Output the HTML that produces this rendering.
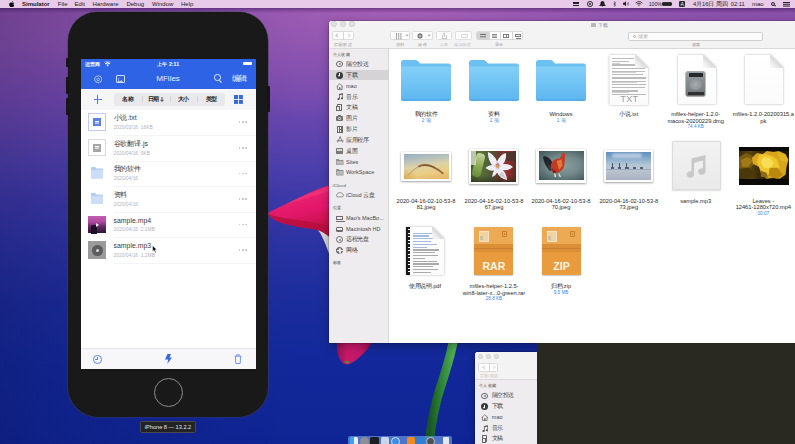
<!DOCTYPE html>
<html>
<head>
<meta charset="utf-8">
<title>Simulator</title>
<style>
*{box-sizing:border-box;margin:0;padding:0}
html,body{width:795px;height:444px;overflow:hidden;background:#10269a}
body{font-family:"Liberation Sans",sans-serif;position:relative;color:#222}
.abs{position:absolute}
.c{display:inline-block;width:1em;text-align:center;font-style:normal;font-weight:inherit}
#desk{left:0;top:0;width:795px;height:444px;
 background:
 linear-gradient(90deg,rgba(10,5,40,.2) 0,rgba(10,5,40,.12) 70px,rgba(10,5,40,0) 300px),
 radial-gradient(ellipse 430px 120px at 400px 0px, rgba(172,100,186,.85) 0%, rgba(152,90,180,.45) 50%, rgba(120,70,170,0) 100%),
 linear-gradient(180deg,#8a4ea8 0%,#8450ac 10%,#7249ae 22%,#5040ac 36%,#3c38a8 45%,#2a32a2 56%,#1b2c9c 68%,#12289a 82%,#0f2595 100%);}
#menubar{left:0;top:0;width:795px;height:7.6px;background:#e7cbe9;font-size:6px;line-height:8px;color:#1a1a1a;white-space:nowrap}
#menubar span{position:absolute;top:0}
/* phone */
#phone{left:68.3px;top:12.4px;width:199.7px;height:404.8px;background:#19191a;border-radius:29px 29px 30px 30px;box-shadow:0 0 0 .6px rgba(70,60,90,.8)}
.pbtn{background:#161617;width:3px;border-radius:1px}
#screen{left:80.6px;top:58.7px;width:175.4px;height:310.3px;background:#fff;overflow:hidden}
#hdr{left:0;top:0;width:175px;height:30px;background:#2f63e6}
#tb{left:0;top:30px;width:175px;height:21px;background:#f6f6f8}
#seg{left:33.600px;top:34.300px;width:110.800px;height:12.700px;background:#e9e9ec;border-radius:3px}
.segt{top:3px;font-size:5.6px;line-height:7px;color:#222;font-weight:bold;width:27.700px;text-align:center}
.row{left:0;width:175px;height:25.6px}
.rt{left:33px;top:4.5px;font-size:6.9px;line-height:8px;color:#3a3a3c;white-space:nowrap}
.rs{left:33px;top:15.3px;font-size:4.9px;line-height:5.4px;color:#b2b2b8;white-space:nowrap}
.dots{left:158px;top:11.700px;width:9px;height:2px}
.dots i{position:absolute;top:0;width:1.7px;height:1.7px;border-radius:50%;background:#c2c2c9}
.sep{left:33px;width:142px;height:.5px;background:#f4f4f6}
#tab{left:0;top:289.3px;width:175px;height:21px;background:#f7f7fa;border-top:.5px solid #e6e6ea}
#home{left:153.5px;top:377.5px;width:29px;height:29px;border-radius:50%;border:1px solid #8b8b8b;background:#19191a}
#plabel{left:140px;top:421px;width:56px;height:12px;background:#232325;border:.5px solid #4a4a4e;border-radius:1.5px;color:#e8e8e8;font-size:5.6px;line-height:11px;text-align:center;white-space:nowrap}
/* finder */
#finder{left:328.5px;top:20.5px;width:470px;height:322px;background:#fff;border-radius:3px 0 0 0;overflow:hidden;box-shadow:0 0 0 .5px rgba(0,0,0,.25),0 3px 10px rgba(0,0,0,.3)}
#ftool{left:0;top:0;width:470px;height:28px;background:#f3f3f3;border-bottom:.6px solid #d9d9d9}
#fside{left:0;top:28px;width:60px;height:294px;background:#eeecee;border-right:.5px solid #d8d8d8}
.sl{left:4px;font-size:4.4px;line-height:6px;color:#8a8a8a;font-weight:bold;white-space:nowrap}
.si{left:17.5px;font-size:5.5px;line-height:7px;color:#464646;white-space:nowrap}
.sic{left:8px;width:7px;height:7px}
.tbtn{background:#fbfbfb;border:.5px solid #cfcfcf;border-radius:1.5px;height:9px;top:11px}
.tl{top:21.5px;font-size:4.2px;line-height:5px;color:#9a9a9a;white-space:nowrap;text-align:center}
.lab{font-size:5.7px;line-height:6.5px;color:#2a2a2a;text-align:center;width:74px;white-space:nowrap}
.lab b{display:block;font-weight:normal;color:#3b83e8;font-size:4.6px;line-height:5.6px}
#dark{left:536.5px;top:343px;width:260px;height:102px;background:#292821}
#f2{left:474.8px;top:352.3px;width:70px;height:95px;background:#eeecee;border-radius:3px 3px 0 0;overflow:hidden;box-shadow:0 0 0 .5px rgba(0,0,0,.3),0 2px 8px rgba(0,0,0,.35)}
#dock{left:347.5px;top:436px;width:104.5px;height:10px;background:rgba(120,170,235,.6);border-radius:2px 2px 0 0}
</style>
</head>
<body>
<div id="desk" class="abs"></div>
<svg class="abs" style="left:0;top:0" width="795" height="444" viewBox="0 0 795 444">
<defs>
<linearGradient id="p1" x1=".3" y1="0" x2=".6" y2="1"><stop offset="0" stop-color="#f02a72"/><stop offset=".55" stop-color="#e2166a"/><stop offset=".8" stop-color="#cc1250"/><stop offset="1" stop-color="#b01040"/></linearGradient>
<linearGradient id="p2" x1="0" y1="0" x2="1" y2="0"><stop offset="0" stop-color="#98124f"/><stop offset=".3" stop-color="#c81a6c"/><stop offset=".7" stop-color="#bd1664"/><stop offset="1" stop-color="#8a104a"/></linearGradient>
<linearGradient id="st" x1="0" y1="0" x2="1" y2="0"><stop offset="0" stop-color="#185522"/><stop offset=".5" stop-color="#2c8436"/><stop offset="1" stop-color="#50aa55"/></linearGradient>
</defs>
<path fill="#d5d9d6" d="M315 227.500c5 3 9 12 14 26v-30z"/>
<path fill="url(#p1)" d="M267.500 213.500c8-5 22-11 34-17 10-5 20-9 28-11.500v52c-4-3.500-9-6.500-14-7.500-10-2-22-3-32-6-7-2-13-5.500-16-10z"/>
<path fill="#b50f3c" opacity=".8" d="M267.500 213.500c6 2.500 13 4 20 5 12 1.800 26 3 42 8v10.500c-4-3.500-9-6.500-14-7.500-10-2-22-3-32-6-7-2-13-5.500-16-10z"/>
<path fill="#f4407e" opacity=".5" d="M285 204.500c10-5 28-13 44-18v5c-14 4-30 9-44 13z"/>
<path fill="url(#p2)" d="M337 340c-.8 8 .5 16 4 21 2.500 3.500 6 4.200 9.500 2.500 8.500-4.500 17.500-13 23-24z"/>
<path fill="#5a8a30" d="M344 361.500c1.500 2 4 2.500 6 1.500l-2.500-2.500z"/>
<path fill="none" stroke="url(#st)" stroke-width="9" d="M453.500 340c-3 17-8 32-13 47-4.500 14-8.500 32-11 52"/>
</svg>
<div class="abs" style="left:0;top:7.500px;width:795px;height:5px;background:linear-gradient(180deg,rgba(40,10,70,.42),rgba(40,10,70,0))"></div>
<div id="menubar" class="abs">
<svg class="abs" style="left:9px;top:.8px" width="5.5" height="6.2" viewBox="0 0 17 20"><path fill="#111" d="M12.2 0c.1 1.2-.4 2.3-1 3.100-.7.800-1.800 1.500-2.900 1.400-.1-1.100.4-2.300 1-3 .700-.800 1.900-1.400 2.900-1.500zM16 14.600c-.4 1-.7 1.500-1.200 2.400-.8 1.200-1.900 2.800-3.300 2.800-1.200 0-1.500-.8-3.200-.8-1.600 0-2 .8-3.200.8-1.400 0-2.400-1.400-3.200-2.700C-.3 13.700-.5 9.600 1 7.500c1-1.500 2.600-2.400 4.100-2.400 1.500 0 2.500.8 3.700.8 1.200 0 2-.8 3.700-.8 1.300 0 2.700.7 3.700 2-3.300 1.800-2.700 6.400.8 7.500z"/></svg>
<span style="left:22px;font-weight:bold">Simulator</span>
<span style="left:57.8px">File</span>
<span style="left:74.6px">Edit</span>
<span style="left:92.5px">Hardware</span>
<span style="left:126.4px">Debug</span>
<span style="left:152px">Window</span>
<span style="left:181px">Help</span>
<div class="abs" style="left:573px;top:2.2px;width:6px;height:1.4px;background:#222"></div>
<div class="abs" style="left:573px;top:4.6px;width:6px;height:1.4px;background:#222"></div>
<div class="abs" style="left:587px;top:1.2px;width:5.6px;height:5.6px;border-radius:50%;border:.8px solid #222"></div>
<div class="abs" style="left:588.9px;top:3.1px;width:1.8px;height:1.8px;border-radius:50%;background:#222"></div>
<svg class="abs" style="left:598.5px;top:1px" width="7" height="6.2" viewBox="0 0 14 12"><path fill="#222" d="M7 0c2.600 0 4 2 4 4.500 0 2.500 1 3.500 2.500 4.500v1h-13V9C2 8 3 7 3 4.500 3 2 4.400 0 7 0zM5.500 10.800h3c0 .8-.7 1.200-1.500 1.200s-1.500-.4-1.500-1.200z"/></svg>
<svg class="abs" style="left:612.5px;top:1px" width="3.4" height="6" viewBox="0 0 7 12"><path fill="none" stroke="#333" stroke-width="1.100" d="M.8 3.300l5 5L3.300 11V1l2.500 2.600-5 5"/></svg>
<svg class="abs" style="left:622.5px;top:1.2px" width="6.500" height="5.600" viewBox="0 0 13 11"><path fill="#222" d="M0 3.500h2.500L6 .5v10l-3.500-3H0z"/><path fill="none" stroke="#222" stroke-width="1" d="M8 3.500c1 .8 1 3.200 0 4M9.800 2c2 1.800 2 5.200 0 7"/></svg>
<svg class="abs" style="left:635px;top:1.200px" width="8" height="5.800" viewBox="0 0 16 12"><path fill="none" stroke="#222" stroke-width="1.700" d="M1 4.200c4-4 10-4 14 0M3.500 6.800c2.700-2.600 6.300-2.600 9 0M6 9.300c1.300-1.200 2.700-1.200 4 0"/></svg>
<span style="left:648.7px;font-size:5.200px">100%</span>
<div class="abs" style="left:662px;top:1.900px;width:9.500px;height:4.400px;border:.6px solid #333;border-radius:1px"></div>
<div class="abs" style="left:663px;top:2.900px;width:7.500px;height:2.400px;background:#222"></div>
<div class="abs" style="left:679px;top:.8px;width:6.400px;height:6.400px;background:#2c2c2e;border-radius:1px;color:#eee;font-size:5px;line-height:6.400px;text-align:center">A</div>
<span style="left:693px;font-size:5.800px">4<em class="c">月</em>16<em class="c">日</em> <em class="c">周</em><em class="c">四</em>&nbsp; 02:11</span>
<span style="left:752px">mao</span>
<div class="abs" style="left:770.5px;top:1.500px;width:4px;height:4px;border-radius:50%;border:.8px solid #222"></div>
<div class="abs" style="left:774px;top:5px;width:2px;height:.8px;background:#222;transform:rotate(45deg)"></div>
<div class="abs" style="left:783px;top:2px;width:6.500px;height:.9px;background:#222;box-shadow:0 1.800px 0 #222,0 3.600px 0 #222"></div>
</div>
<div id="phone" class="abs"></div>
<div class="abs pbtn" style="left:66.300px;top:58px;height:9px"></div>
<div class="abs pbtn" style="left:66.300px;top:77px;height:17px"></div>
<div class="abs pbtn" style="left:66.300px;top:98px;height:17px"></div>
<div class="abs pbtn" style="left:267px;top:86px;height:26px"></div>
<div id="screen" class="abs">
<div id="hdr" class="abs">
 <div class="abs" style="left:4.300px;top:2px;font-size:5.200px;line-height:6.400px;color:#fff;font-weight:bold;white-space:nowrap"><em class="c">运</em><em class="c">营</em><em class="c">商</em></div>
 <svg class="abs" style="left:23px;top:2.500px" width="7.200" height="5.400" viewBox="0 0 16 12"><path fill="#fff" d="M8 12l-2.600-3c1.500-1.300 3.700-1.300 5.200 0zM3.800 7.200 2 5.200c3.400-3 8.600-3 12 0l-1.800 2c-2.400-2.100-6-2.100-8.400 0zM.6 3.600C4.800-.2 11.200-.2 15.400 3.600L16 3C11.500-1 4.500-1 0 3z"/></svg>
 <div class="abs" style="left:0;top:2px;width:175px;text-align:center;font-size:5.200px;line-height:6.400px;color:#fff;font-weight:bold"><em class="c">上</em><em class="c">午</em> 2:11</div>
 <div class="abs" style="left:162.500px;top:3.200px;width:8.500px;height:3.600px;background:#fff;border-radius:1px"></div>
 <svg class="abs" style="left:13.200px;top:16.400px" width="8.400" height="8.800" viewBox="0 0 20 21"><path fill="none" stroke="#cfdcff" stroke-width="1.800" stroke-linejoin="round" d="M10 1.200l2.300 1.900 3-.4.900 2.900 2.600 1.500-1 2.900 1 2.900-2.600 1.500-.9 2.900-3-.4-2.300 1.900-2.300-1.900-3 .4-.9-2.900L1.200 13l1-2.900-1-2.900 2.600-1.500.9-2.900 3 .4z"/><circle cx="10" cy="10.500" r="3" fill="none" stroke="#cfdcff" stroke-width="1.700"/></svg>
 <div class="abs" style="left:35.800px;top:16.400px;width:8.400px;height:8.200px;border:.9px solid #cfdcff;border-radius:1px"></div>
 <svg class="abs" style="left:36.800px;top:19.200px" width="6.400" height="4.400" viewBox="0 0 13 9"><path fill="#cfdcff" d="M0 9l3.500-4.500L6 7.500 8.500 4 13 9z"/><circle cx="3" cy="1.800" r="1.300" fill="#cfdcff"/></svg>
 <div class="abs" style="left:0;top:15px;width:175px;text-align:center;font-size:8px;line-height:10px;color:#e9efff">MFiles</div>
 <div class="abs" style="left:133.500px;top:15.800px;width:6.600px;height:6.600px;border-radius:50%;border:.9px solid #e4ebff"></div>
 <div class="abs" style="left:138.800px;top:22px;width:3px;height:.9px;background:#e4ebff;transform:rotate(45deg)"></div>
 <div class="abs" style="left:151px;top:15px;font-size:7.600px;line-height:10px;color:#f2f5ff;white-space:nowrap"><em class="c">编</em><em class="c">辑</em></div>
</div>
<div id="tb" class="abs"></div>
<div class="abs" style="left:13px;top:40.100px;width:8.800px;height:1px;background:#4d79e8"></div>
<div class="abs" style="left:16.900px;top:36.200px;width:1px;height:8.800px;background:#4d79e8"></div>
<div id="seg" class="abs">
 <div class="abs segt" style="left:0"><em class="c">名</em><em class="c">称</em></div>
 <div class="abs segt" style="left:27.700px"><em class="c">日</em><em class="c">期</em><svg width="4" height="5" viewBox="0 0 8 10" style="margin-left:1.200px;vertical-align:-.6px"><path fill="none" stroke="#222" stroke-width="1.600" d="M4 0v8.500M.8 5.500L4 8.800l3.200-3.300"/></svg></div>
 <div class="abs segt" style="left:55.400px"><em class="c">大</em><em class="c">小</em></div>
 <div class="abs segt" style="left:83.100px"><em class="c">类</em><em class="c">型</em></div>
 <div class="abs" style="left:27.700px;top:3px;width:.5px;height:6.500px;background:#d2d2d7"></div>
 <div class="abs" style="left:55.400px;top:3px;width:.5px;height:6.500px;background:#d2d2d7"></div>
 <div class="abs" style="left:83.100px;top:3px;width:.5px;height:6.500px;background:#d2d2d7"></div>
</div>
<div class="abs" style="left:153.600px;top:36.400px;width:4px;height:4px;background:#3567e6;box-shadow:4.900px 0 0 #3567e6,0 4.900px 0 #3567e6,4.900px 4.900px 0 #3567e6"></div>
<div class="abs row" style="top:51.0px"><div class="abs" style="left:7.600px;top:3.600px;width:17.600px;height:17.600px;border:.6px solid #c0cbf3;background:#fff"></div><div class="abs" style="left:12.400px;top:8.400px;width:8.200px;height:8.200px;background:#5b7fe6"></div><div class="abs" style="left:14.700px;top:11.200px;width:3.600px;height:.8px;background:#fff;box-shadow:0 1.600px 0 #fff"></div><div class="abs rt"><em class="c">小</em><em class="c">说</em>.txt</div><div class="abs rs">2020/03/16&nbsp; 16KB</div><div class="abs dots"><i style="left:0"></i><i style="left:3.400px"></i><i style="left:6.800px"></i></div></div>
<div class="abs sep" style="top:76.3px"></div>
<div class="abs row" style="top:76.6px"><div class="abs" style="left:7.600px;top:3.600px;width:17.600px;height:17.600px;border:.6px solid #d9d9de;background:#fff"></div><div class="abs" style="left:12.400px;top:8.400px;width:8.200px;height:8.200px;background:#a6a6aa"></div><div class="abs" style="left:14.700px;top:11.200px;width:3.600px;height:.8px;background:#fff;box-shadow:0 1.600px 0 #fff"></div><div class="abs rt"><em class="c">谷</em><em class="c">歌</em><em class="c">翻</em><em class="c">译</em>.js</div><div class="abs rs">2020/04/16&nbsp; 0KB</div><div class="abs dots"><i style="left:0"></i><i style="left:3.400px"></i><i style="left:6.800px"></i></div></div>
<div class="abs sep" style="top:101.9px"></div>
<div class="abs row" style="top:102.2px"><svg class="abs" style="left:10.500px;top:6.500px" width="12" height="11.500" viewBox="0 0 24 23"><path fill="#b4cef2" d="M0 1.500C0 .7.700 0 1.500 0h7l2.500 3h11.500c.8 0 1.500.7 1.500 1.500v17c0 .8-.7 1.500-1.500 1.500h-21C.7 23 0 22.300 0 21.500z"/><path fill="#cbddf7" d="M0 6h24v15.500c0 .8-.7 1.500-1.500 1.500h-21C.7 23 0 22.300 0 21.500z"/></svg><div class="abs rt"><em class="c">我</em><em class="c">的</em><em class="c">软</em><em class="c">件</em></div><div class="abs rs">2020/04/16</div><div class="abs dots"><i style="left:0"></i><i style="left:3.400px"></i><i style="left:6.800px"></i></div></div>
<div class="abs sep" style="top:127.5px"></div>
<div class="abs row" style="top:127.8px"><svg class="abs" style="left:10.500px;top:6.500px" width="12" height="11.500" viewBox="0 0 24 23"><path fill="#b4cef2" d="M0 1.500C0 .7.700 0 1.500 0h7l2.500 3h11.500c.8 0 1.500.7 1.500 1.500v17c0 .8-.7 1.500-1.500 1.500h-21C.7 23 0 22.300 0 21.500z"/><path fill="#cbddf7" d="M0 6h24v15.500c0 .8-.7 1.500-1.500 1.500h-21C.7 23 0 22.300 0 21.500z"/></svg><div class="abs rt"><em class="c">资</em><em class="c">料</em></div><div class="abs rs">2020/04/16</div><div class="abs dots"><i style="left:0"></i><i style="left:3.400px"></i><i style="left:6.800px"></i></div></div>
<div class="abs sep" style="top:153.1px"></div>
<div class="abs row" style="top:153.4px"><div class="abs" style="left:7.600px;top:3.600px;width:17.800px;height:17.800px;background:linear-gradient(180deg,#c35fb0 0%,#b0489f 35%,#6c2a6c 60%,#2a1535 100%)"></div><div class="abs" style="left:10px;top:13px;width:6px;height:8.500px;background:#1d1026;border-radius:2px 2px 0 0"></div><div class="abs" style="left:15.200px;top:10.500px;width:0;height:0;border-left:3.500px solid #f3e6f5;border-top:2.200px solid transparent;border-bottom:2.200px solid transparent"></div><div class="abs rt">sample.mp4</div><div class="abs rs">2020/04/16&nbsp; 2.1MB</div><div class="abs dots"><i style="left:0"></i><i style="left:3.400px"></i><i style="left:6.800px"></i></div></div>
<div class="abs sep" style="top:178.7px"></div>
<div class="abs row" style="top:179.0px"><div class="abs" style="left:7.600px;top:3.600px;width:17.800px;height:17.800px;background:#9a9a9c"></div><div class="abs" style="left:11.500px;top:7.500px;width:10.500px;height:10.500px;border-radius:50%;background:#5c5c5e"></div><div class="abs" style="left:15.200px;top:11.200px;width:3.200px;height:3.200px;border-radius:50%;background:#d8d8da"></div><div class="abs rt">sample.mp3</div><div class="abs rs">2020/04/16&nbsp; 1.2MB</div><div class="abs dots"><i style="left:0"></i><i style="left:3.400px"></i><i style="left:6.800px"></i></div></div>
<div class="abs sep" style="top:204.3px"></div>

<div id="tab" class="abs">
 <div class="abs" style="left:12.700px;top:6px;width:8.600px;height:8.600px;border-radius:50%;border:.9px solid #5d86ea"></div>
 <div class="abs" style="left:16.700px;top:8px;width:.8px;height:3px;background:#5d86ea"></div>
 <div class="abs" style="left:14.600px;top:10.400px;width:2.800px;height:.8px;background:#5d86ea"></div>
 <svg class="abs" style="left:84px;top:5.500px" width="7" height="10" viewBox="0 0 14 20"><path fill="#3567e6" d="M5 0h7l-3 7h5L4.500 20 6.500 11H0z"/></svg>
 <svg class="abs" style="left:153.500px;top:5.400px" width="8" height="10" viewBox="0 0 16 20"><path fill="none" stroke="#5d86ea" stroke-width="1.700" d="M1 4.500h14M5.500 4V1.500h5V4M2.800 4.500l.8 14.500h8.800l.8-14.500"/></svg>
</div>
</div>
<div id="home" class="abs"></div>
<div id="plabel" class="abs">iPhone 8 — 13.2.2</div>
<svg class="abs" style="left:152.400px;top:244.800px" width="6" height="8.500" viewBox="0 0 12 17"><path fill="#111" stroke="#fff" stroke-width="1" d="M1 1v12l3-2.600 2.200 5 2-.9-2.200-4.800H10z"/></svg>
<div id="finder" class="abs">
<div id="ftool" class="abs"></div>
<div id="fside" class="abs"></div>
<div class="abs " style="left:2.9px;top:0.9px;width:5.2px;height:5.2px;border-radius:50%;background:#dfdfdf;border:.4px solid #d0d0d0"></div>
<div class="abs " style="left:11.9px;top:0.9px;width:5.2px;height:5.2px;border-radius:50%;background:#dfdfdf;border:.4px solid #d0d0d0"></div>
<div class="abs " style="left:20.9px;top:0.9px;width:5.2px;height:5.2px;border-radius:50%;background:#dfdfdf;border:.4px solid #d0d0d0"></div>
<div class="abs " style="left:231.5px;top:1.5px;width:80.0px;height:7.0px;font-size:5.4px;line-height:7px;color:#8a8a8a;text-align:center;white-space:nowrap"><span style="display:inline-block;width:5px;height:4px;background:#b9b9b9;border-radius:.6px;margin-right:1.500px;vertical-align:-0.300px"></span><em class="c">下</em><em class="c">载</em></div>
<div class="abs " style="left:3.1px;top:10.3px;width:22.1px;height:9.0px;background:#fdfdfd;border:.5px solid #dadada;border-radius:1.600px"><div class="abs" style="left:10.800px;top:0;width:.5px;height:8px;background:#d6d6d6"></div><div class="abs" style="left:3.800px;top:2.400px;width:3px;height:3px;border-left:.8px solid #bbb;border-bottom:.8px solid #bbb;transform:rotate(45deg)"></div><div class="abs" style="left:14px;top:2.400px;width:3px;height:3px;border-right:.8px solid #d2d2d2;border-top:.8px solid #d2d2d2;transform:rotate(45deg)"></div></div>
<div class="abs " style="left:61.5px;top:10.3px;width:20.4px;height:9.0px;background:#fdfdfd;border:.5px solid #dadada;border-radius:1.600px"><div class="abs" style="left:5px;top:1.700px;width:1.200px;height:1.200px;background:#999;box-shadow:2.200px 0 0 #999,4.400px 0 0 #999,0 2.200px 0 #999,2.200px 2.200px 0 #999,4.400px 2.200px 0 #999,0 4.400px 0 #999,2.200px 4.400px 0 #999,4.400px 4.400px 0 #999"></div><div class="abs" style="left:14.800px;top:2.400px;width:2.400px;height:2.400px;border-right:.7px solid #aaa;border-bottom:.7px solid #aaa;transform:rotate(45deg)"></div></div>
<div class="abs " style="left:83.9px;top:10.3px;width:20.4px;height:9.0px;background:#fdfdfd;border:.5px solid #dedede;border-radius:1.600px"><svg class="abs" style="left:3.600px;top:1.200px" width="6" height="6" viewBox="0 0 12 12"><g fill="#777"><circle cx="6" cy="6" r="3.900"/><rect x="5" y="0" width="2" height="12" rx=".5"/><rect x="0" y="5" width="12" height="2" rx=".5"/><rect x="5" y="0" width="2" height="12" rx=".5" transform="rotate(45 6 6)"/><rect x="5" y="0" width="2" height="12" rx=".5" transform="rotate(-45 6 6)"/></g><circle cx="6" cy="6" r="1.700" fill="#fdfdfd"/></svg><div class="abs" style="left:14.500px;top:2.400px;width:2.400px;height:2.400px;border-right:.7px solid #aaa;border-bottom:.7px solid #aaa;transform:rotate(45deg)"></div></div>
<div class="abs " style="left:107.2px;top:10.3px;width:15.9px;height:9.0px;background:#fdfdfd;border:.5px solid #dedede;border-radius:1.600px"><div class="abs" style="left:5.500px;top:3.200px;width:4.600px;height:3.800px;border:.6px solid #c8c8c8;border-top:none"></div><div class="abs" style="left:7.500px;top:1.200px;width:.6px;height:4px;background:#c8c8c8"></div><div class="abs" style="left:6.600px;top:1.300px;width:2.200px;height:2.200px;border-left:.6px solid #c8c8c8;border-top:.6px solid #c8c8c8;transform:rotate(45deg)"></div></div>
<div class="abs " style="left:126.8px;top:10.3px;width:16.9px;height:9.0px;background:#fdfdfd;border:.5px solid #dedede;border-radius:1.600px"><div class="abs" style="left:4.500px;top:2.300px;width:7.500px;height:4px;border:.6px solid #d4d4d4;border-radius:1px"></div></div>
<div class="abs " style="left:147.5px;top:10.3px;width:46.7px;height:9.0px;background:#fdfdfd;border:.5px solid #dadada;border-radius:1.600px"><div class="abs" style="left:0;top:0;width:11.600px;height:8px;background:#d4d4d4;border-radius:1.300px 0 0 1.300px"></div><div class="abs" style="left:3px;top:2.200px;width:5.500px;height:1.500px;background:#6e6e6e;box-shadow:0 2.300px 0 #6e6e6e"></div><div class="abs" style="left:11.600px;top:0;width:.5px;height:8px;background:#d6d6d6"></div><div class="abs" style="left:23.200px;top:0;width:.5px;height:8px;background:#d6d6d6"></div><div class="abs" style="left:34.800px;top:0;width:.5px;height:8px;background:#d6d6d6"></div><div class="abs" style="left:14.800px;top:2.400px;width:5.500px;height:.8px;background:#8a8a8a;box-shadow:0 1.500px 0 #8a8a8a,0 3px 0 #8a8a8a"></div><div class="abs" style="left:26.300px;top:2px;width:6px;height:4.200px;border:.7px solid #7c7c7c"></div><div class="abs" style="left:29px;top:2px;width:.7px;height:4.200px;background:#7c7c7c"></div><div class="abs" style="left:38px;top:2px;width:6px;height:3.600px;border:.7px solid #7c7c7c"></div><div class="abs" style="left:38.500px;top:6.200px;width:5px;height:.7px;background:#7c7c7c"></div></div>
<div class="abs " style="left:299.9px;top:11.1px;width:135.0px;height:9.0px;background:#fbfbfb;border:.5px solid #cfcfcf;border-radius:1.800px"><div class="abs" style="left:3.500px;top:2.200px;width:3px;height:3px;border:.6px solid #aaa;border-radius:50%"></div><div class="abs" style="left:9px;top:1px;font-size:4.800px;line-height:6px;color:#b5b5b5"><em class="c">搜</em><em class="c">索</em></div></div>
<div class="abs " style="left:-5.9px;top:21.5px;width:40.0px;height:5.0px;font-size:4.300px;line-height:5px;color:#8f8f8f;text-align:center;white-space:nowrap"><em class="c">后</em><em class="c">退</em>/<em class="c">前</em><em class="c">进</em></div>
<div class="abs " style="left:51.5px;top:21.5px;width:40.0px;height:5.0px;font-size:4.300px;line-height:5px;color:#8f8f8f;text-align:center;white-space:nowrap"><em class="c">排</em><em class="c">列</em></div>
<div class="abs " style="left:74.0px;top:21.5px;width:40.0px;height:5.0px;font-size:4.300px;line-height:5px;color:#8f8f8f;text-align:center;white-space:nowrap"><em class="c">操</em><em class="c">作</em></div>
<div class="abs " style="left:95.7px;top:21.5px;width:40.0px;height:5.0px;font-size:4.300px;line-height:5px;color:#c0c0c0;text-align:center;white-space:nowrap"><em class="c">共</em><em class="c">享</em></div>
<div class="abs " style="left:114.2px;top:21.5px;width:40.0px;height:5.0px;font-size:4.300px;line-height:5px;color:#c0c0c0;text-align:center;white-space:nowrap"><em class="c">编</em><em class="c">辑</em><em class="c">标</em><em class="c">签</em></div>
<div class="abs " style="left:150.8px;top:21.5px;width:40.0px;height:5.0px;font-size:4.300px;line-height:5px;color:#8f8f8f;text-align:center;white-space:nowrap"><em class="c">显</em><em class="c">示</em></div>
<div class="abs " style="left:347.3px;top:21.5px;width:40.0px;height:5.0px;font-size:4.300px;line-height:5px;color:#8f8f8f;text-align:center;white-space:nowrap"><em class="c">搜</em><em class="c">索</em></div>
<div class="abs sl" style="left:4.0px;top:31.5px;width:40.0px;height:6.0px;"><em class="c">个</em><em class="c">人</em><em class="c">收</em><em class="c">藏</em></div>
<div class="abs " style="left:0.5px;top:49.5px;width:59.5px;height:10.3px;background:#d5d3d5"></div>
<div class="abs " style="left:7.8px;top:40.1px;width:6.8px;height:6.8px;border-radius:50%;border:.9px solid #6b6b6b"><div class="abs" style="left:1.300px;top:1.300px;width:2.400px;height:2.400px;border-radius:50%;border:.7px solid #6b6b6b"></div></div>
<div class="abs si" style="left:17.5px;top:40.0px;width:45.0px;height:7.0px;"><em class="c">隔</em><em class="c">空</em><em class="c">投</em><em class="c">送</em></div>
<div class="abs " style="left:7.8px;top:51.0px;width:7.0px;height:7.0px;border-radius:50%;background:#3a3a3a"><div class="abs" style="left:2.900px;top:1.300px;width:1.200px;height:3px;background:#fff"></div><div class="abs" style="left:1.700px;top:3.500px;width:0;height:0;border-left:1.800px solid transparent;border-right:1.800px solid transparent;border-top:2px solid #fff"></div></div>
<div class="abs si" style="left:17.5px;top:51.0px;width:45.0px;height:7.0px;"><em class="c">下</em><em class="c">载</em></div>
<svg class="abs" style="left:7.5px;top:62.2px" width="7.600" height="7" viewBox="0 0 15 14"><path fill="none" stroke="#6b6b6b" stroke-width="1.600" d="M1 7.500L7.500 1.500 14 7.500M3 6v7h9V6"/><rect x="6" y="8.500" width="3" height="4.500" fill="#6b6b6b"/></svg><div class="abs si" style="left:17.5px;top:62.3px;width:45.0px;height:7.0px;">mao</div>
<svg class="abs" style="left:8.1px;top:72.9px" width="6.400" height="7.200" viewBox="0 0 13 14"><path fill="#555" d="M4 1.500L12.500 0v10.500a2.300 2 0 1 1-1.500-1.900V3L5.500 4v8a2.300 2 0 1 1-1.500-1.900z"/></svg><div class="abs si" style="left:17.5px;top:73.0px;width:45.0px;height:7.0px;"><em class="c">音</em><em class="c">乐</em></div>
<div class="abs " style="left:8.3px;top:83.5px;width:5.2px;height:7.0px;border:.8px solid #666;border-radius:.6px"><div class="abs" style="left:-1.600px;top:1.300px;width:4px;height:5.200px;border:.8px solid #666;background:#eeecee"></div></div>
<div class="abs si" style="left:17.5px;top:83.6px;width:45.0px;height:7.0px;"><em class="c">文</em><em class="c">稿</em></div>
<div class="abs " style="left:7.8px;top:95.6px;width:7.0px;height:5.2px;background:#6f6f6f;border-radius:1px"><div class="abs" style="left:2.200px;top:1.300px;width:2.600px;height:2.600px;border-radius:50%;border:.7px solid #eee"></div><div class="abs" style="left:2px;top:-1px;width:3px;height:1.200px;background:#6f6f6f"></div></div>
<div class="abs si" style="left:17.5px;top:94.5px;width:45.0px;height:7.0px;"><em class="c">图</em><em class="c">片</em></div>
<div class="abs " style="left:8.2px;top:105.0px;width:6.2px;height:7.0px;border:.9px solid #666"><div class="abs" style="left:.9px;top:2.300px;width:2.600px;height:.8px;background:#666"></div><div class="abs" style="left:.9px;top:0;width:.7px;height:5.400px;background:#666"></div><div class="abs" style="left:2.900px;top:0;width:.7px;height:5.400px;background:#666"></div></div>
<div class="abs si" style="left:17.5px;top:105.0px;width:45.0px;height:7.0px;"><em class="c">影</em><em class="c">片</em></div>
<svg class="abs" style="left:7.2px;top:115.9px" width="8.200" height="7" viewBox="0 0 16 14"><path fill="none" stroke="#666" stroke-width="1.500" d="M3 13L8 1l5 12M1 9.500h14"/></svg><div class="abs si" style="left:17.5px;top:116.0px;width:45.0px;height:7.0px;"><em class="c">应</em><em class="c">用</em><em class="c">程</em><em class="c">序</em></div>
<div class="abs " style="left:7.8px;top:127.7px;width:7.0px;height:5.4px;background:#7a7a7a;border-radius:.5px"><div class="abs" style="left:.8px;top:.8px;width:5.400px;height:2.400px;background:#d8d8d8"></div></div>
<div class="abs si" style="left:17.5px;top:127.0px;width:45.0px;height:7.0px;"><em class="c">桌</em><em class="c">面</em></div>
<svg class="abs" style="left:7.600px;top:138.3px" width="7.600" height="6.400" viewBox="0 0 15 13"><path fill="#8e8e8e" d="M0 1.200C0 .5.500 0 1.200 0h4l1.500 1.800h7.100c.7 0 1.200.5 1.200 1.200v8.800c0 .7-.5 1.200-1.200 1.200H1.200C.5 13 0 12.500 0 11.800z"/><path fill="#b9b9b9" d="M1.200 4.200h12.600v7.600H1.200z"/></svg>
<div class="abs si" style="left:17.5px;top:138.0px;width:45.0px;height:7.0px;">Sites</div>
<svg class="abs" style="left:7.600px;top:148.8px" width="7.600" height="6.400" viewBox="0 0 15 13"><path fill="#8e8e8e" d="M0 1.200C0 .5.500 0 1.200 0h4l1.500 1.800h7.100c.7 0 1.200.5 1.200 1.200v8.800c0 .7-.5 1.200-1.200 1.200H1.200C.5 13 0 12.500 0 11.800z"/><path fill="#b9b9b9" d="M1.200 4.200h12.600v7.600H1.200z"/></svg>
<div class="abs si" style="left:17.5px;top:148.5px;width:45.0px;height:7.0px;">WorkSpace</div>
<div class="abs sl" style="left:4.0px;top:162.3px;width:40.0px;height:6.0px;">iCloud</div>
<svg class="abs" style="left:7.5px;top:171.9px" width="8" height="5.400" viewBox="0 0 16 11"><path fill="none" stroke="#6b6b6b" stroke-width="1.400" d="M4 10a3 3 0 0 1-.5-6 4.500 4.500 0 0 1 8.600-.5A3.300 3.300 0 0 1 12.500 10z"/></svg><div class="abs si" style="left:17.5px;top:171.0px;width:45.0px;height:7.0px;">iCloud <em class="c">云</em><em class="c">盘</em></div>
<div class="abs sl" style="left:4.0px;top:184.5px;width:40.0px;height:6.0px;"><em class="c">位</em><em class="c">置</em></div>
<div class="abs " style="left:7.8px;top:195.5px;width:7.0px;height:4.4px;border:.8px solid #6b6b6b;border-radius:.5px"><div class="abs" style="left:-1.600px;top:3.800px;width:8.800px;height:.9px;background:#6b6b6b"></div></div>
<div class="abs si" style="left:17.5px;top:194.4px;width:45.0px;height:7.0px;">Mao's MacBo...</div>
<div class="abs " style="left:7.8px;top:206.0px;width:7.0px;height:5.2px;border:.8px solid #6b6b6b;border-radius:1px"><div class="abs" style="left:0;top:2.400px;width:5.400px;height:.7px;background:#6b6b6b"></div></div>
<div class="abs si" style="left:17.5px;top:205.1px;width:45.0px;height:7.0px;">Macintosh HD</div>
<div class="abs " style="left:7.8px;top:215.9px;width:7.0px;height:7.0px;border:.9px solid #6b6b6b;border-radius:50%"><div class="abs" style="left:1.700px;top:1.700px;width:1.800px;height:1.800px;border-radius:50%;border:.6px solid #6b6b6b"></div></div>
<div class="abs si" style="left:17.5px;top:215.9px;width:45.0px;height:7.0px;"><em class="c">远</em><em class="c">程</em><em class="c">光</em><em class="c">盘</em></div>
<div class="abs " style="left:7.8px;top:226.6px;width:7.0px;height:7.0px;border:.9px solid #555;border-radius:50%;background:#8a8a8a"><div class="abs" style="left:1.300px;top:-.4px;width:2.600px;height:6px;border:.6px solid #eee;border-radius:50%"></div><div class="abs" style="left:-.3px;top:2.300px;width:5.800px;height:.6px;background:#eee"></div></div>
<div class="abs si" style="left:17.5px;top:226.6px;width:45.0px;height:7.0px;"><em class="c">网</em><em class="c">络</em></div>
<div class="abs sl" style="left:4.0px;top:239.0px;width:40.0px;height:6.0px;"><em class="c">标</em><em class="c">签</em></div>
<!--ITEMS_START--><svg class="abs" style="left:72.5px;top:39.5px" width="50" height="41" viewBox="0 0 100 82"><defs><linearGradient id="fg1" x1="0" y1="0" x2="0" y2="1"><stop offset="0" stop-color="#84d0f8"/><stop offset="1" stop-color="#5cb6ef"/></linearGradient></defs><path fill="#6cc0f2" d="M0 5c0-2.800 2.200-5 5-5h24c2 0 3.500.8 5 2.500l4 4.500h57c2.800 0 5 2.200 5 5v65c0 2.800-2.200 5-5 5H5c-2.800 0-5-2.200-5-5z"/><path fill="url(#fg1)" d="M0 13h100v64c0 2.800-2.200 5-5 5H5c-2.800 0-5-2.200-5-5z"/><path fill="#4ea6e6" opacity=".55" d="M0 78.500h100c0 2-2 3.500-5 3.500H5c-3 0-5-1.500-5-3.500z"/></svg>
<svg class="abs" style="left:140.3px;top:39.5px" width="50" height="41" viewBox="0 0 100 82"><defs><linearGradient id="fg2" x1="0" y1="0" x2="0" y2="1"><stop offset="0" stop-color="#84d0f8"/><stop offset="1" stop-color="#5cb6ef"/></linearGradient></defs><path fill="#6cc0f2" d="M0 5c0-2.800 2.200-5 5-5h24c2 0 3.500.8 5 2.500l4 4.500h57c2.800 0 5 2.200 5 5v65c0 2.800-2.200 5-5 5H5c-2.800 0-5-2.200-5-5z"/><path fill="url(#fg2)" d="M0 13h100v64c0 2.800-2.200 5-5 5H5c-2.800 0-5-2.200-5-5z"/><path fill="#4ea6e6" opacity=".55" d="M0 78.500h100c0 2-2 3.500-5 3.500H5c-3 0-5-1.500-5-3.500z"/></svg>
<svg class="abs" style="left:207.5px;top:39.5px" width="50" height="41" viewBox="0 0 100 82"><defs><linearGradient id="fg3" x1="0" y1="0" x2="0" y2="1"><stop offset="0" stop-color="#84d0f8"/><stop offset="1" stop-color="#5cb6ef"/></linearGradient></defs><path fill="#6cc0f2" d="M0 5c0-2.800 2.200-5 5-5h24c2 0 3.500.8 5 2.500l4 4.500h57c2.800 0 5 2.200 5 5v65c0 2.800-2.200 5-5 5H5c-2.800 0-5-2.200-5-5z"/><path fill="url(#fg3)" d="M0 13h100v64c0 2.800-2.200 5-5 5H5c-2.800 0-5-2.200-5-5z"/><path fill="#4ea6e6" opacity=".55" d="M0 78.500h100c0 2-2 3.500-5 3.500H5c-3 0-5-1.500-5-3.500z"/></svg>
<div class="abs" style="left:280.9px;top:34.3px;width:39px;height:50.2px;filter:drop-shadow(0 .4px .9px rgba(0,0,0,.32))"><div class="abs" style="left:0;top:0;width:39px;height:50.2px;background:linear-gradient(180deg,#ffffff,#fbfbfb);clip-path:polygon(0 0,26px 0,39px 13px,39px 50.2px,0 50.2px);overflow:hidden"><div class="abs" style="left:3px;top:3.0px;width:22px;height:1.300px;background:#8f8f8f;opacity:.6"></div><div class="abs" style="left:3px;top:6.2px;width:17px;height:1.300px;background:#8f8f8f;opacity:.6"></div><div class="abs" style="left:3px;top:7.8px;width:8px;height:.8px;background:#9a9a9a;opacity:.45"></div><div class="abs" style="left:3px;top:9.5px;width:25px;height:1.300px;background:#8f8f8f;opacity:.6"></div><div class="abs" style="left:3px;top:12.8px;width:33px;height:1.300px;background:#8f8f8f;opacity:.6"></div><div class="abs" style="left:3px;top:16.0px;width:33px;height:1.300px;background:#8f8f8f;opacity:.6"></div><div class="abs" style="left:3px;top:17.5px;width:24px;height:.8px;background:#9a9a9a;opacity:.45"></div><div class="abs" style="left:3px;top:19.2px;width:31px;height:1.300px;background:#8f8f8f;opacity:.6"></div><div class="abs" style="left:3px;top:22.5px;width:34px;height:1.300px;background:#8f8f8f;opacity:.6"></div><div class="abs" style="left:3px;top:25.8px;width:34px;height:1.300px;background:#8f8f8f;opacity:.6"></div><div class="abs" style="left:3px;top:27.2px;width:25px;height:.8px;background:#9a9a9a;opacity:.45"></div><div class="abs" style="left:3px;top:29.0px;width:34px;height:1.300px;background:#8f8f8f;opacity:.6"></div><div class="abs" style="left:3px;top:32.2px;width:33px;height:1.300px;background:#8f8f8f;opacity:.6"></div><div class="abs" style="left:3px;top:35.5px;width:26px;height:1.300px;background:#8f8f8f;opacity:.6"></div><div class="abs" style="left:3px;top:37.0px;width:17px;height:.8px;background:#9a9a9a;opacity:.45"></div><div class="abs" style="left:3px;top:38.8px;width:34px;height:1.300px;background:#8f8f8f;opacity:.6"></div><div class="abs" style="left:0;top:39.200px;width:39px;text-align:center;font-size:9.400px;line-height:10px;color:#9c9c9c;letter-spacing:.2px;text-indent:1px">TXT</div></div><div class="abs" style="left:26px;top:0;width:13px;height:13px;background:linear-gradient(225deg,rgba(255,255,255,0) 49%,#d9d9d9 50%,#efefef 75%,#fafafa 100%);border-bottom-left-radius:2.500px"></div></div>
<div class="abs" style="left:349.2px;top:34.0px;width:38.5px;height:49.8px;filter:drop-shadow(0 .4px .9px rgba(0,0,0,.32))"><div class="abs" style="left:0;top:0;width:38.5px;height:49.8px;background:linear-gradient(180deg,#ffffff,#fbfbfb);clip-path:polygon(0 0,25.5px 0,38.5px 13px,38.5px 49.8px,0 49.8px);overflow:hidden"><div class="abs" style="left:8.600px;top:17.400px;width:18.800px;height:24.200px;background:linear-gradient(180deg,#9aa0a3 0%,#868c8f 40%,#7a8083 75%,#6a6f72 100%);border-radius:1.200px;box-shadow:0 0 0 .4px #5a5f62"><div class="abs" style="left:2.500px;top:1.200px;width:13.800px;height:4px;background:#26282a;border-radius:.5px"></div><div class="abs" style="left:1.500px;top:20px;width:15.800px;height:3px;background:#2e3032"></div><div class="abs" style="left:3px;top:7.500px;width:12.800px;height:10.500px;border-radius:50%;background:radial-gradient(circle,#a8aeb0,#81878a)"></div></div></div><div class="abs" style="left:25.5px;top:0;width:13px;height:13px;background:linear-gradient(225deg,rgba(255,255,255,0) 49%,#d9d9d9 50%,#efefef 75%,#fafafa 100%);border-bottom-left-radius:2.500px"></div></div>
<div class="abs" style="left:416.4px;top:34.0px;width:38.5px;height:49.8px;filter:drop-shadow(0 .4px .9px rgba(0,0,0,.32))"><div class="abs" style="left:0;top:0;width:38.5px;height:49.8px;background:linear-gradient(180deg,#ffffff,#fbfbfb);clip-path:polygon(0 0,25.5px 0,38.5px 13px,38.5px 49.8px,0 49.8px);overflow:hidden"></div><div class="abs" style="left:25.5px;top:0;width:13px;height:13px;background:linear-gradient(225deg,rgba(255,255,255,0) 49%,#d9d9d9 50%,#efefef 75%,#fafafa 100%);border-bottom-left-radius:2.500px"></div></div>
<div class="abs lab" style="left:60.5px;top:90.7px;width:74.0px;height:20.0px;"><em class="c">我</em><em class="c">的</em><em class="c">软</em><em class="c">件</em><b>2 <em class="c">项</em></b></div>
<div class="abs lab" style="left:128.5px;top:90.7px;width:74.0px;height:20.0px;"><em class="c">资</em><em class="c">料</em><b>2 <em class="c">项</em></b></div>
<div class="abs lab" style="left:195.5px;top:90.7px;width:74.0px;height:20.0px;">Windows<b>1 <em class="c">项</em></b></div>
<div class="abs lab" style="left:263.3px;top:90.7px;width:74.0px;height:20.0px;"><em class="c">小</em><em class="c">说</em>.txt</div>
<div class="abs lab" style="left:330.2px;top:90.7px;width:74.0px;height:20.0px;">mfiles-helper-1.2.0-<br>macos-20200229.dmg<b>74.4 KB</b></div>
<div class="abs lab" style="left:397.8px;top:90.7px;width:74.0px;height:20.0px;">mfiles-1.2.0-20200315.a<br>pk</div>
<div class="abs" style="left:72.9px;top:131.1px;width:49.6px;height:29.6px;background:#fff;box-shadow:0 .5px 2px rgba(0,0,0,.33),0 0 0 .4px rgba(0,0,0,.1)"><div class="abs" style="left:2.4px;top:2.4px;right:2.4px;bottom:2.4px;overflow:hidden;background:linear-gradient(172deg,#93adc2 0%,#b7c2bc 25%,#ddd3a6 48%,#ebcd82 72%,#e2b468 100%)"><div class="abs" style="left:0;top:14px;width:14px;height:12px;background:radial-gradient(ellipse at 0% 100%,rgba(200,140,60,.55),rgba(200,140,60,0) 70%)"></div><svg class="abs" style="left:0;top:0" width="44.800" height="24.800" viewBox="0 0 45 25"><path fill="none" stroke="#b08a50" stroke-width=".8" stroke-linecap="round" d="M4 21.500C8 17 12 13.500 17 11.500"/><path fill="none" stroke="#96683a" stroke-width="1.900" stroke-linecap="round" d="M15 12.500c4-1.800 9-1.800 14 .5s8 4.500 10 6.500"/><path fill="none" stroke="#7d5228" stroke-width=".9" stroke-linecap="round" d="M19 11.500c4-.8 8 0 12 2.200"/></svg></div></div>
<div class="abs" style="left:140.5px;top:128.0px;width:49.1px;height:35.4px;background:#fff;box-shadow:0 .5px 2px rgba(0,0,0,.33),0 0 0 .4px rgba(0,0,0,.1)"><div class="abs" style="left:2.4px;top:2.4px;right:2.4px;bottom:2.4px;overflow:hidden;background:linear-gradient(90deg,#3f5a2c 0%,#5a7538 18%,#4f5f3a 40%,#6a3a30 62%,#9a2f2e 80%,#5f2a26 100%)"><div class="abs" style="left:0;top:24px;width:45px;height:8px;background:linear-gradient(180deg,rgba(40,45,25,0),rgba(40,45,25,.75))"></div><div class="abs" style="left:3px;top:2px;width:9px;height:24px;background:linear-gradient(180deg,#c9d6a0,#8fae58 50%,#6a8a3c);border-radius:4px;transform:rotate(14deg)"></div><div class="abs" style="left:0;top:0;width:5px;height:14px;background:#d8dfd0;opacity:.8"></div><div class="abs" style="left:33px;top:1px;width:11px;height:9px;background:#3a3a30;opacity:.7"></div><svg class="abs" style="left:7px;top:0" width="36" height="31" viewBox="0 0 36 31"><path fill="#eeedf4" d="M14 14C11 10 9.500 5 10 1c4 1.500 7.500 5 9 9.500C21 6 24 3 28 2c.5 4.500-.5 8-3 11 3.500-.5 7 .5 10 3-3 2.500-6.500 3.500-10 3 2.500 3 4 6.500 4 10-4.500-1-8-3.500-10-7.500-1 2-2.500 3.500-5 4.500.5-2.500 1-4.500 2-6.500-3 .5-6-.5-8.500-2.500 2-2 4.500-3 7.500-3z"/><path fill="#d6c6dc" d="M16 14.500l3.500-4 3.500 4.500-3 4.500z"/><path fill="#c23a5a" opacity=".7" d="M18 13.500l2-1.500 1.500 2.500-2 2z"/><circle cx="19.500" cy="15.500" r="1.400" fill="#d8a030"/><path fill="#cfcad8" d="M24 20.500l5 8-8-4.500z"/></svg></div></div>
<div class="abs" style="left:207.9px;top:128.4px;width:49.9px;height:33.9px;background:#fff;box-shadow:0 .5px 2px rgba(0,0,0,.33),0 0 0 .4px rgba(0,0,0,.1)"><div class="abs" style="left:2.4px;top:2.4px;right:2.4px;bottom:2.4px;overflow:hidden;background:radial-gradient(ellipse at 55% 50%,#8a9e9c 0%,#74898a 45%,#50686a 80%,#3f5558 100%)"><svg class="abs" style="left:0;top:0" width="45.100" height="29.100" viewBox="0 0 45 29"><path fill="#1f222b" d="M4 5.500c3.500-1.200 7 1.500 9 5.500l3 6.500-4.500 2.500C7.500 17 4.500 11 4 5.500z"/><path fill="#343a44" d="M8 10l5 8-3 1.500z"/><path fill="#c23a26" d="M12.500 12c2-3.500 5.500-5 8.500-4.500l2-4.500 3 1.500-.5 6c.5 5.500-2.500 10-7.500 11.500l-4.500-1c-2-3-2.500-6-1-9z"/><path fill="#e07a38" d="M17.500 10l5-1.500 1 6-3.500 4.500z"/><path fill="#7d261e" d="M13 17l5 4.500-4 .5z"/><path fill="#d63526" d="M22.500 3l2.500-1.500 1.500 2.500-2.500 1.500z"/><path fill="#e4dcc8" d="M15 22.500l.5 3.500h1.500l-.5-3.500zM19 22.500l1.500 3.500H22l-1.500-3.500z"/></svg></div></div>
<div class="abs" style="left:275.5px;top:129.5px;width:49.4px;height:32.0px;background:#fff;box-shadow:0 .5px 2px rgba(0,0,0,.33),0 0 0 .4px rgba(0,0,0,.1)"><div class="abs" style="left:2.4px;top:2.4px;right:2.4px;bottom:2.4px;overflow:hidden;background:linear-gradient(180deg,#5f8fbf 0%,#86aacb 22%,#a9c0d4 40%,#b8c6d2 52%,#bdc5d2 60%,#b4bccb 80%,#a8b1c2 100%)"><div class="abs" style="left:6px;top:.5px;width:30px;height:5px;background:rgba(235,240,245,.5);border-radius:3px;filter:blur(1.300px)"></div><div class="abs" style="left:5.500px;top:10.500px;width:34px;height:5.500px;background:repeating-linear-gradient(90deg,rgba(45,60,80,.8) 0 .7px,transparent .7px 7.200px)"></div><div class="abs" style="left:4.300px;top:15px;width:36px;height:1.800px;background:repeating-linear-gradient(90deg,#3f5064 0 3.200px,transparent 3.200px 7.200px);opacity:.85"></div><div class="abs" style="left:0;top:16.600px;width:45px;height:.8px;background:#8897a8;opacity:.6"></div></div></div>
<div class="abs" style="left:343.0px;top:120.5px;width:49.5px;height:48.7px;background:linear-gradient(180deg,#f2f2f2,#eaeaea);border:.5px solid #dcdcdc;border-radius:1px;box-shadow:0 .5px 1.500px rgba(0,0,0,.14)"><svg class="abs" style="left:13.800px;top:13px" width="20" height="23" viewBox="0 0 20 23"><path fill="#c8c8c8" d="M5.500 3.500L19.500 0v16.500a3.700 3.200 0 1 1-2.500-3V5.500L8 7.700v11.800a3.700 3.200 0 1 1-2.500-3z"/></svg></div>
<div class="abs" style="left:410.5px;top:126.6px;width:49.5px;height:37.6px;background:#0b0a06;overflow:hidden"><div class="abs" style="left:0;top:3.800px;width:49.500px;height:27.800px;background:linear-gradient(90deg,#3b2c0a 0%,#5a430e 22%,#3a2b08 40%,#1c1505 100%)"></div><svg class="abs" style="left:0;top:0" width="49.500" height="37.600" viewBox="0 0 50 38"><path fill="#7a5c10" d="M0 10l7-4 7 3 2 8-6 5-10 1z"/><path fill="#a07a16" d="M2 13l7-3 5 4-5 6-6 0z"/><path fill="#4a380a" d="M0 22l10-1 5 5-3 5H0z"/><path fill="#d8a61c" d="M13 11l5-5 6 1 4-3 7 1 5-1 7 3 3 6-2 7-1 8-6 4-7-1-6 1-6-6-2-6-6-3z"/><path fill="#f0c62e" d="M20 8l7-1 6 2 6 4 2 8-5 6-8 1-6-5-4-7z"/><path fill="#f9dd55" d="M25 10l6 1 4 5-3 6-7-1-3-6z"/><path fill="#b8880f" d="M31 21l8 0 5 7-6 4-8-3z"/><path fill="#e2b422" d="M39 5l8 3 2 7-7-1z"/><path fill="#8a6a10" d="M22 24l6 2 1 5-7-1z"/></svg><div class="abs" style="left:0;top:0;width:49.500px;height:3.800px;background:#0b0a06"></div><div class="abs" style="left:0;bottom:0;width:49.500px;height:6px;background:#0b0a06"></div></div>
<div class="abs lab" style="left:60.5px;top:177.2px;width:74.0px;height:20.0px;">2020-04-16-02-10-53-8<br>81.jpeg</div>
<div class="abs lab" style="left:128.5px;top:177.2px;width:74.0px;height:20.0px;">2020-04-16-02-10-53-8<br>67.jpeg</div>
<div class="abs lab" style="left:195.5px;top:177.2px;width:74.0px;height:20.0px;">2020-04-16-02-10-53-8<br>70.jpeg</div>
<div class="abs lab" style="left:263.3px;top:177.2px;width:74.0px;height:20.0px;">2020-04-16-02-10-53-8<br>73.jpeg</div>
<div class="abs lab" style="left:330.2px;top:177.2px;width:74.0px;height:20.0px;">sample.mp3</div>
<div class="abs lab" style="left:397.8px;top:177.2px;width:74.0px;height:20.0px;">Leaves -<br>12461-1280x720.mp4<b>00:07</b></div>
<div class="abs" style="left:77.5px;top:206.1px;width:38px;height:48.7px;filter:drop-shadow(0 .4px .9px rgba(0,0,0,.32))"><div class="abs" style="left:0;top:0;width:38px;height:48.7px;background:linear-gradient(180deg,#ffffff,#fbfbfb);clip-path:polygon(0 0,26px 0,38px 12px,38px 48.7px,0 48.7px);overflow:hidden"><div class="abs" style="left:0;top:0;width:4.300px;height:48.700px;background:repeating-linear-gradient(180deg,#1a1a1a 0 2.300px,#fff 2.300px 3.480px)"></div><div class="abs" style="left:0;top:0;width:2.300px;height:48.700px;background:#1a1a1a"></div><div class="abs" style="left:7px;top:6.0px;width:20px;height:1.200px;background:#86a4d4;opacity:.75"></div><div class="abs" style="left:7px;top:8.8px;width:16px;height:1.200px;background:#86a4d4;opacity:.75"></div><div class="abs" style="left:7px;top:11.6px;width:22px;height:1.200px;background:#86a4d4;opacity:.75"></div><div class="abs" style="left:7px;top:14.4px;width:18px;height:1.200px;background:#86a4d4;opacity:.75"></div><div class="abs" style="left:7px;top:17.2px;width:24px;height:1.200px;background:#86a4d4;opacity:.75"></div><div class="abs" style="left:7px;top:20.0px;width:14px;height:1.200px;background:#86a4d4;opacity:.75"></div><div class="abs" style="left:7px;top:22.8px;width:26px;height:1.200px;background:#8f8f8f;opacity:.75"></div><div class="abs" style="left:7px;top:25.6px;width:22px;height:1.200px;background:#8f8f8f;opacity:.75"></div><div class="abs" style="left:7px;top:28.4px;width:25px;height:1.200px;background:#8f8f8f;opacity:.75"></div><div class="abs" style="left:7px;top:31.2px;width:12px;height:1.200px;background:#8f8f8f;opacity:.75"></div><div class="abs" style="left:7px;top:34.0px;width:24px;height:1.200px;background:#8f8f8f;opacity:.75"></div><div class="abs" style="left:7px;top:36.8px;width:26px;height:1.200px;background:#8f8f8f;opacity:.75"></div><div class="abs" style="left:7px;top:39.6px;width:20px;height:1.200px;background:#8f8f8f;opacity:.75"></div><div class="abs" style="left:7px;top:42.4px;width:25px;height:1.200px;background:#8f8f8f;opacity:.75"></div><div class="abs" style="left:7px;top:45.2px;width:18px;height:1.200px;background:#8f8f8f;opacity:.75"></div></div><div class="abs" style="left:26px;top:0;width:12px;height:12px;background:linear-gradient(225deg,rgba(255,255,255,0) 49%,#d9d9d9 50%,#efefef 75%,#fafafa 100%);border-bottom-left-radius:2.500px"></div></div>
<div class="abs" style="left:145.9px;top:206.1px;width:39.0px;height:48.7px;background:#e9a045;border-radius:1.500px;overflow:hidden;box-shadow:0 .5px 1.200px rgba(0,0,0,.22)"><div class="abs" style="left:0;top:0;width:39px;height:17.500px;background:#ecaa55"></div><div class="abs" style="left:0;top:17.500px;width:39px;height:8px;background:#db9038"></div><div class="abs" style="left:0;top:25.500px;width:39px;height:23.200px;background:#e99c3e"></div><div class="abs" style="left:0;top:21.200px;width:39px;height:.8px;background:#c98030"></div><div class="abs" style="left:4.500px;top:4.500px;width:10px;height:10.500px;background:#f2d2a2;border:.5px solid #f7e3c3"></div><div class="abs" style="left:5.500px;top:9px;width:3.500px;height:4.500px;background:#c9c0a8"></div><div class="abs" style="left:27.500px;top:4.500px;width:5.500px;height:5.500px;border:.7px solid #c57f2d;border-radius:.8px"></div><div class="abs" style="left:29.600px;top:6px;width:1.300px;height:2.500px;background:#c57f2d"></div><div class="abs" style="left:0;top:33.800px;width:39px;text-align:center;font-size:10.500px;line-height:12px;color:#fff6e6;font-weight:bold">RAR</div></div>
<div class="abs" style="left:213.5px;top:206.1px;width:39.0px;height:48.7px;background:#e9a045;border-radius:1.500px;overflow:hidden;box-shadow:0 .5px 1.200px rgba(0,0,0,.22)"><div class="abs" style="left:0;top:0;width:39px;height:17.500px;background:#ecaa55"></div><div class="abs" style="left:0;top:17.500px;width:39px;height:8px;background:#db9038"></div><div class="abs" style="left:0;top:25.500px;width:39px;height:23.200px;background:#e99c3e"></div><div class="abs" style="left:0;top:21.200px;width:39px;height:.8px;background:#c98030"></div><div class="abs" style="left:4.500px;top:4.500px;width:10px;height:10.500px;background:#f2d2a2;border:.5px solid #f7e3c3"></div><div class="abs" style="left:5.500px;top:9px;width:3.500px;height:4.500px;background:#c9c0a8"></div><div class="abs" style="left:27.500px;top:4.500px;width:5.500px;height:5.500px;border:.7px solid #c57f2d;border-radius:.8px"></div><div class="abs" style="left:29.600px;top:6px;width:1.300px;height:2.500px;background:#c57f2d"></div><div class="abs" style="left:0;top:33.800px;width:39px;text-align:center;font-size:10.500px;line-height:12px;color:#fff6e6;font-weight:bold">ZIP</div></div>
<div class="abs lab" style="left:59.5px;top:262.5px;width:74.0px;height:20.0px;"><em class="c">使</em><em class="c">用</em><em class="c">说</em><em class="c">明</em>.pdf</div>
<div class="abs lab" style="left:128.5px;top:262.5px;width:74.0px;height:20.0px;">mfiles-helper-1.2.5-<br>win8-later-x...0-green.rar<b>28.8 KB</b></div>
<div class="abs lab" style="left:195.5px;top:262.5px;width:74.0px;height:20.0px;"><em class="c">归</em><em class="c">档</em>.zip<b>9.5 MB</b></div>
<!--ITEMS_END-->
</div>
<div id="f2" class="abs">
 <div class="abs" style="left:0;top:0;width:70px;height:28px;background:#f3f3f3;border-bottom:.6px solid #d9d9d9"></div>
 <div class="abs" style="left:3px;top:1.800px;width:5.200px;height:5.200px;border-radius:50%;background:#dfdfdf;border:.4px solid #d0d0d0"></div>
 <div class="abs" style="left:11px;top:1.800px;width:5.200px;height:5.200px;border-radius:50%;background:#dfdfdf;border:.4px solid #d0d0d0"></div>
 <div class="abs" style="left:19.200px;top:1.800px;width:5.200px;height:5.200px;border-radius:50%;background:#dfdfdf;border:.4px solid #d0d0d0"></div>
 <div class="abs" style="left:3.700px;top:10.500px;width:20px;height:9px;background:#fdfdfd;border:.5px solid #dadada;border-radius:1.600px"><div class="abs" style="left:9.800px;top:0;width:.5px;height:8px;background:#d6d6d6"></div><div class="abs" style="left:3.600px;top:2.400px;width:3px;height:3px;border-left:.8px solid #ccc;border-bottom:.8px solid #ccc;transform:rotate(45deg)"></div><div class="abs" style="left:12.500px;top:2.400px;width:3px;height:3px;border-right:.8px solid #dcdcdc;border-top:.8px solid #dcdcdc;transform:rotate(45deg)"></div></div>
 <div class="abs" style="left:3px;top:21px;width:22px;font-size:4.300px;line-height:5px;color:#bdbdbd;text-align:center;white-space:nowrap"><em class="c">后</em><em class="c">退</em>/<em class="c">前</em><em class="c">进</em></div>
 <div class="abs sl" style="left:4px;top:31px"><em class="c">个</em><em class="c">人</em><em class="c">收</em><em class="c">藏</em></div>
 <div class="abs" style="left:6.600px;top:40.300px;width:6.800px;height:6.800px;border-radius:50%;border:.9px solid #6b6b6b"><div class="abs" style="left:1.300px;top:1.300px;width:2.400px;height:2.400px;border-radius:50%;border:.7px solid #6b6b6b"></div></div>
 <div class="abs si" style="left:17px;top:40.200px"><em class="c">隔</em><em class="c">空</em><em class="c">投</em><em class="c">送</em></div>
 <div class="abs" style="left:6.500px;top:51px;width:7px;height:7px;border-radius:50%;background:#3a3a3a"><div class="abs" style="left:2.900px;top:1.300px;width:1.200px;height:3px;background:#fff"></div><div class="abs" style="left:1.700px;top:3.500px;width:0;height:0;border-left:1.800px solid transparent;border-right:1.800px solid transparent;border-top:2px solid #fff"></div></div>
 <div class="abs si" style="left:17px;top:51px"><em class="c">下</em><em class="c">载</em></div>
 <svg class="abs" style="left:6.200px;top:61.700px" width="7.600" height="7" viewBox="0 0 15 14"><path fill="none" stroke="#6b6b6b" stroke-width="1.600" d="M1 7.500L7.500 1.500 14 7.500M3 6v7h9V6"/><rect x="6" y="8.500" width="3" height="4.500" fill="#6b6b6b"/></svg>
 <div class="abs si" style="left:17px;top:61.800px">mao</div>
 <svg class="abs" style="left:6.800px;top:72.400px" width="6.400" height="7.200" viewBox="0 0 13 14"><path fill="#555" d="M4 1.500L12.500 0v10.500a2.300 2 0 1 1-1.500-1.900V3L5.500 4v8a2.300 2 0 1 1-1.500-1.900z"/></svg>
 <div class="abs si" style="left:17px;top:72.500px"><em class="c">音</em><em class="c">乐</em></div>
 <div class="abs" style="left:7.500px;top:83px;width:5.200px;height:7px;border:.8px solid #666;border-radius:.6px"><div class="abs" style="left:-1.600px;top:1.300px;width:4px;height:5.200px;border:.8px solid #666;background:#eeecee"></div></div>
 <div class="abs si" style="left:17px;top:83px"><em class="c">文</em><em class="c">稿</em></div>
</div>
<div id="dark" class="abs"></div>
<div id="dock" class="abs">
 <div class="abs" style="left:2px;top:1.200px;width:8px;height:9px;background:linear-gradient(90deg,#3fa0f0 50%,#e8eef5 50%);border-radius:1.500px"></div>
 <div class="abs" style="left:12.500px;top:1.200px;width:8.500px;height:9px;background:#8c8f98;border-radius:50%"></div>
 <div class="abs" style="left:22.500px;top:1.200px;width:8.500px;height:9px;background:#1c1f22;border-radius:1.500px"></div>
 <div class="abs" style="left:33px;top:1.200px;width:8.500px;height:9px;background:#c9d6e8;border-radius:1.500px"></div>
 <div class="abs" style="left:43.500px;top:1px;width:9px;height:9px;background:#3b8be8;border-radius:50%;border:.8px solid #cfe0f5"></div>
 <div class="abs" style="left:59px;top:1.200px;width:8px;height:9px;background:#f08a1d;border-radius:1.500px"></div>
 <div class="abs" style="left:68.500px;top:1.200px;width:8.500px;height:9px;background:#2f7fd8;border-radius:1.500px"></div>
 <div class="abs" style="left:78.500px;top:1.200px;width:9px;height:9px;background:#4b5058;border-radius:50%;border:.8px solid #b8c0cc"></div>
 <div class="abs" style="left:95px;top:1px;width:6.500px;height:9px;background:#e4e8ee;border-radius:1px"></div>
</div>
</body>
</html>
